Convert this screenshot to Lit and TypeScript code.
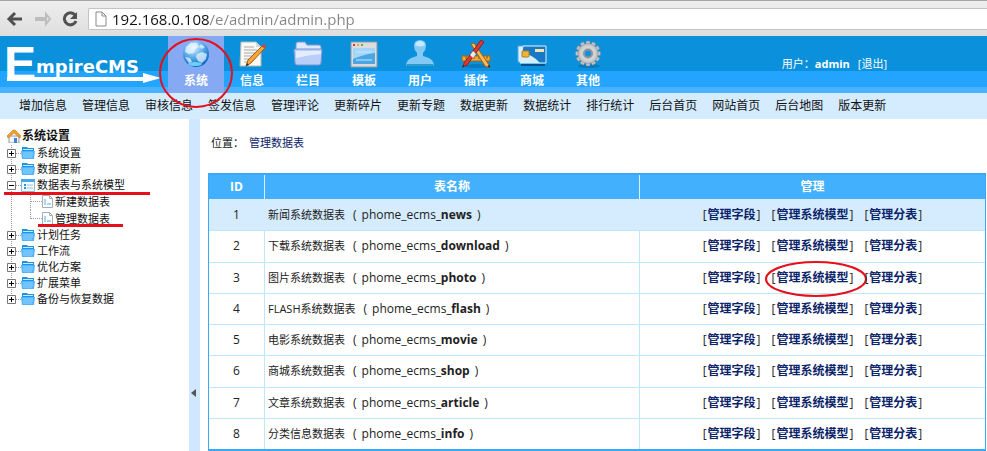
import { LitElement, html, svg, css, nothing } from "lit";
import { customElement, property } from "lit/decorators.js";
import { classMap } from "lit/directives/class-map.js";

const fonts = css`"Open Sans", "Noto Sans CJK SC", sans-serif`;

const topIcons: Record<string, unknown> = {
  globe: svg`
    <defs><radialGradient id="g" cx="40%" cy="25%" r="75%"><stop offset="0" stop-color="#e8f6ff"/><stop offset=".45" stop-color="#69b4ee"/><stop offset="1" stop-color="#0768c4"/></radialGradient></defs>
    <circle cx="15" cy="15" r="13" fill="url(#g)"/>
    <path d="M5 8l5-4 6 0 2 4-4 2-1 4-5 1-4-2zM16 15l5-2 5 2-1 5-4 4-4-2-2-4zM20 5l4 3-3 2-3-2zM4 18l5 1 2 4-3 1z" fill="#f0f8ff" opacity=".7"/>
    <ellipse cx="14" cy="25" rx="7" ry="2" fill="#7fe4ff" opacity=".8"/>`,
  doc: svg`
    <path d="M4 3h15l5 5v19H3z" fill="#f8f8f4" stroke="#b9b9b4"/><path d="M19 3v5h5z" fill="#d8d8d4"/>
    <path d="M7 8h10M7 11h13M7 14h12M7 17h9M7 20h7M7 23h5" stroke="#a9a9a9"/>
    <path d="M25 7l3 2-14 15-5 3 2-6z" fill="#f3a536" stroke="#a55b18"/>
    <path d="M25 7l2-2 2 2-1 3z" fill="#d8433d"/><path d="M9 27l1-3 2 2z" fill="#333"/>`,
  folder: svg`
    <path d="M3 5q0-2 2-2h7l2 3h12q2 0 2 2v15H3z" fill="#dfe9fb" stroke="#7d9ad2"/>
    <path d="M1 11q0-1 1-1h26q1 0 1 1l-1 13q0 2-2 2H4q-2 0-2-2z" fill="#b9cff7" stroke="#7795d4"/>
    <path d="M3 12h25v3q-13 1-25 4z" fill="#e3edff"/>`,
  window: svg`
    <path d="M2 3h26v25H2z" fill="#dcdcdc" stroke="#8d9aa5"/>
    <circle cx="5" cy="6" r="1" fill="#d00"/><circle cx="9" cy="6" r="1" fill="#e90"/><circle cx="13" cy="6" r="1" fill="#393"/>
    <path d="M4 9h22v16H4z" fill="#4ba6e4"/><path d="M4 9h22v5q-10 1-22 6z" fill="#a3d6f8"/><path d="M7 13h16M7 21h16" stroke="#c8e8ff"/>`,
  user: svg`
    <path d="M1 27q0-7 8-9l3-1v-3q-3-3-3-7 0-6 6-6t6 6q0 4-3 7v3l3 1q8 2 8 9z" fill="#83c9f6"/>
    <path d="M10 6q1-4 5-4t5 4q-5 3-10 0z" fill="#c6e8ff"/><path d="M2 25h26l1 2H1z" fill="#2c9cc8"/>`,
  tools: svg`
    <ellipse cx="16" cy="27" rx="12" ry="2" fill="#05639f" opacity=".5"/>
    <path d="M1 17h28v5H1z" fill="#eda83b" stroke="#a96513"/><path d="M5 17v3M9 17v3M13 17v3M18 17v3M22 17v3M26 17v3" stroke="#8f5510"/>
    <path d="M10 5l3-1 15 22v3l-4-2z" fill="#f6bd55" stroke="#a15d14"/><path d="M26 27l3 2v-3z" fill="#333"/>
    <path d="M20 1l3 2L6 26l-4 2 1-4z" fill="#d63a31" stroke="#96201a"/><path d="M12 12l3 3-3 4-3-3z" fill="#e9edf2"/><path d="M2 26l2 1-3 2z" fill="#333"/>`,
  card: svg`
    <path d="M1 7h22v16H1z" fill="#d8f0ff" stroke="#56a9df"/>
    <path d="M6 7h23v17H3z" fill="#1978c6" stroke="#d9f1ff"/>
    <path d="M5 14q10 1 18 10H3z" fill="#d4effc"/><path d="M18 10h9v3h-9z" fill="#f3e5b0"/>
    <rect x="5" y="12" width="7" height="6" rx="1" fill="#f2b43c" stroke="#b87a15"/><path d="M4 26h24" stroke="#0c4f8f" stroke-width="2"/>`,
  gear: svg`
    <ellipse cx="16" cy="27" rx="11" ry="2" fill="#05639f" opacity=".5"/>
    <g fill="#c0c4c8" stroke="#85898e" stroke-width=".5">
      ${[0, 30, 60, 90, 120, 150].map((a) => svg`<rect x="13" y="2" width="4" height="25" rx="1" transform="rotate(${a} 15 14.5)"/>`)}
      <circle cx="15" cy="14.500" r="10" />
    </g>
    <circle cx="15" cy="14.500" r="8" fill="#d0d2d4"/><circle cx="15" cy="14.500" r="5" fill="#90959a"/><circle cx="15" cy="14.500" r="3" fill="#1391de"/>`,
};

const sections = [
  { label: "系统", icon: "globe", active: true },
  { label: "信息", icon: "doc" },
  { label: "栏目", icon: "folder" },
  { label: "模板", icon: "window" },
  { label: "用户", icon: "user" },
  { label: "插件", icon: "tools" },
  { label: "商城", icon: "card" },
  { label: "其他", icon: "gear" },
];

const quickLinks = [
  "增加信息", "管理信息", "审核信息", "签发信息", "管理评论", "更新碎片", "更新专题",
  "数据更新", "数据统计", "排行统计", "后台首页", "网站首页", "后台地图", "版本更新",
];

interface Branch {
  label: string;
  marked?: boolean;
  children?: { label: string; marked?: boolean }[];
}

const tree: Branch[] = [
  { label: "系统设置" },
  { label: "数据更新" },
  {
    label: "数据表与系统模型",
    marked: true,
    children: [{ label: "新建数据表" }, { label: "管理数据表", marked: true }],
  },
  { label: "计划任务" },
  { label: "工作流" },
  { label: "优化方案" },
  { label: "扩展菜单" },
  { label: "备份与恢复数据" },
];

const dataTables = [
  ["新闻系统数据表", "news"],
  ["下载系统数据表", "download"],
  ["图片系统数据表", "photo"],
  ["FLASH系统数据表", "flash"],
  ["电影系统数据表", "movie"],
  ["商城系统数据表", "shop"],
  ["文章系统数据表", "article"],
  ["分类信息数据表", "info"],
];

@customElement("browser-bar")
class BrowserBar extends LitElement {
  static styles = css`
    :host { display: flex; align-items: center; height: 36px; padding-left: 6px; background: linear-gradient(#eeeeee, #dedede); border-top: 1px solid #a8a4a6; box-sizing: border-box; overflow: hidden; }
    button { display: flex; width: 28px; height: 24px; padding: 0; border: 0; background: none; align-items: center; }
    .address { display: flex; align-items: center; flex: 1; height: 22px; margin-left: -2px; padding-left: 6px; background: #fff; border: 1px solid #c4c4c4; border-right: 0; border-radius: 2px 0 0 2px; box-sizing: border-box; }
    input { flex: 1; min-width: 0; margin-left: 5px; padding: 0; border: 0; outline: 0; font: 15px/20px "Open Sans", sans-serif; color: transparent; background: linear-gradient(90deg, #111 98px, #858585 98px); -webkit-background-clip: text; background-clip: text; }
  `;
  render() {
    return html`
      <button aria-label="后退"><svg width="18" height="16" viewBox="0 0 18 16" fill="none" stroke="#505050" stroke-width="3"><path d="M16 8H4M9 2L3 8l6 6"/></svg></button>
      <button aria-label="前进"><svg width="18" height="16" viewBox="0 0 18 16" fill="none" stroke="#bdbdbd" stroke-width="2"><path d="M2 7h10v-4l4 5-4 5v-4H2z"/></svg></button>
      <button aria-label="刷新"><svg width="18" height="16" viewBox="0 0 18 16"><path d="M13 4a6 6 0 1 0 1 6" fill="none" stroke="#505050" stroke-width="3"/><path d="M15 1v7H8z" fill="#505050"/></svg></button>
      <div class="address">
        <svg width="12" height="16" viewBox="0 0 12 16" fill="#fff" stroke="#8a8a8a"><path d="M1 1h6l4 4v10H1zM7 1v4h4"/></svg>
        <input aria-label="地址" value="192.168.0.108/e/admin/admin.php" />
      </div>`;
  }
}

@customElement("cms-header")
class CmsHeader extends LitElement {
  static styles = css`
    :host { display: block; font: 12px/16px ${fonts}; }
    .banner { display: flex; height: 57px; color: #fff; background: linear-gradient(#0b90dc 35px, #22a4ff 35px 51px, #48b2ff 51px); }
    .logo { position: relative; display: flex; flex: none; width: 168px; padding-left: 4px; box-sizing: border-box; }
    .initial { font: bold 48px/56px "Liberation Sans", sans-serif; }
    .rest { font: bold 18px/62px "DejaVu Sans", sans-serif; }
    .arrow { position: absolute; left: 7px; bottom: 9px; }
    nav.sections { display: flex; flex: none; }
    .section { position: relative; display: flex; flex-direction: column; align-items: center; width: 56px; padding-top: 3px; box-sizing: border-box; color: #fff; text-decoration: none; font-weight: bold; gap: 4px; }
    .active { background: #86a9f3; }
    .ring { position: absolute; left: -10px; top: 1px; z-index: 1; }
    .account { display: flex; gap: 8px; margin: 20px 100px 0 auto; font-size: 11px; white-space: nowrap; }
    .account a { color: #fff; text-decoration: none; }
    .quick { display: flex; gap: 15px; height: 26px; padding-left: 19px; background: #d5ecff; line-height: 26px; white-space: nowrap; overflow: hidden; }
    .quick a { color: #111; text-decoration: none; }
  `;
  render() {
    return html`
      <header class="banner">
        <div class="logo">
          <span class="initial">E</span><span class="rest">mpireCMS</span>
          <svg class="arrow" width="154" height="12" viewBox="0 0 154 12" fill="#fff"><path d="M0 5h136V1l18 5-18 5V9H0z"/></svg>
        </div>
        <nav class="sections">
          ${sections.map((s) => html`
            <a href="#" class=${classMap({ section: true, active: !!s.active })}>
              <svg width="30" height="30" viewBox="0 0 30 30">${topIcons[s.icon]}</svg>
              <span>${s.label}</span>
              ${s.active ? html`<svg class="ring" width="76" height="72" viewBox="0 0 76 72"><ellipse cx="38" cy="36" rx="36" ry="34" fill="none" stroke="#e60f1c" stroke-width="2"/></svg>` : nothing}
            </a>`)}
        </nav>
        <div class="account"><span>用户：<b>admin</b></span><a href="#">[退出]</a></div>
      </header>
      <nav class="quick">${quickLinks.map((l) => html`<a href="#">${l}</a>`)}</nav>`;
  }
}

@customElement("side-tree")
class SideTree extends LitElement {
  static styles = css`
    :host { display: block; padding: 8px 0 0 7px; font: 11px/16px ${fonts}; color: #111; white-space: nowrap; }
    h2 { display: flex; align-items: center; gap: 1px; margin: 0; font-size: 12px; line-height: 18px; }
    ul { margin: 0; padding: 0; list-style: none; }
    .row { position: relative; display: flex; align-items: center; height: 16px; }
    .row a { color: #111; text-decoration: none; margin-left: 2px; }
    .toggle { display: flex; width: 9px; height: 9px; padding: 0; border: 0; background: none; }
    .stub { width: 5px; border-top: 1px dotted #999; }
    .branch { background: repeating-linear-gradient(#999 0 1px, transparent 1px 2px) 4px 0 / 1px 100% no-repeat; }
    .branch:last-child { background-size: 1px 8px; }
    .leaves { margin-left: 23px; }
    .leaves li { background: repeating-linear-gradient(#999 0 1px, transparent 1px 2px) 0 0 / 1px 100% no-repeat; }
    .leaves li:last-child { background-size: 1px 8px; }
    .leaves .row { height: 17px; }
    .leaves .stub { width: 12px; }
    .mark::after { content: ""; position: absolute; left: -3px; bottom: -2px; z-index: 1; width: 146px; height: 3px; background: #e60f1c; }
    .leaves .mark::after { left: 8px; width: 85px; bottom: 0; }
  `;
  private toggle(open: boolean) {
    return html`<button class="toggle" aria-label=${open ? "收起" : "展开"}>
      <svg width="9" height="9" viewBox="0 0 9 9"><path d="M.5.5h8v8h-8z" fill="#fff" stroke="#777"/><path d=${open ? "M2 4.5h5" : "M2 4.5h5M4.5 2v5"} stroke="#000"/></svg>
    </button>`;
  }
  private folder(open: boolean) {
    return open
      ? html`<svg width="14" height="14" viewBox="0 0 14 14"><path d="M.5 1.500h13v12h-13z" fill="#f4fbff" stroke="#8bb9d8"/><path d="M0 1h14v3H0z" fill="#43aaf2"/><path d="M3 7h2M3 10h2" stroke="#2f8fda" stroke-width="2"/><path d="M6 7h6M6 10h6" stroke="#9cc4e0"/></svg>`
      : html`<svg width="14" height="14" viewBox="0 0 14 14"><path d="M1 13V1h5l1 1h6v11z" fill="#1b94e6"/><path d="M2 3.500h10" stroke="#c5e9ff"/><path d="M0 5h14l-1 8H1z" fill="#55b4f8"/><path d="M2 7h10M2 9h10M2 11h9" stroke="#8ed3ff"/></svg>`;
  }
  render() {
    return html`
      <h2>
        <svg width="14" height="14" viewBox="0 0 14 14"><path d="M2 7h10v7H2z" fill="#f4f4f4" stroke="#999"/><path d="M0 7l6-6 2 0 6 6-1 2-6-5-6 5z" fill="#f5a02c" stroke="#b66a10" stroke-width=".5"/><path d="M7 9h3v5H7z" fill="#3a89cf"/></svg>
        系统设置
      </h2>
      <ul>
        ${tree.map((b) => html`
          <li class="branch">
            <div class=${classMap({ row: true, mark: !!b.marked })}>
              ${this.toggle(!!b.children)}<span class="stub"></span>${this.folder(!!b.children)}<a href="#">${b.label}</a>
            </div>
            ${b.children ? html`<ul class="leaves">${b.children.map((c) => html`
              <li><div class=${classMap({ row: true, mark: !!c.marked })}>
                <span class="stub"></span>
                <svg width="11" height="13" viewBox="0 0 11 13"><path d="M.5.5h7l3 3v9H.5z" fill="#fff" stroke="#a5aeb3"/><path d="M7.500.5v3h3" fill="none" stroke="#a5aeb3"/><path d="M3 4v6M5 9h4" stroke="#4aa7e6"/></svg>
                <a href="#">${c.label}</a>
              </div></li>`)}</ul>` : nothing}
          </li>`)}
      </ul>`;
  }
}

@customElement("table-list")
class TableList extends LitElement {
  static styles = css`
    :host { display: grid; grid-template-rows: auto 1fr; padding: 0 1px 0 8px; font: 11px/16px ${fonts}; color: #222; }
    .crumb { display: flex; gap: 5px; padding: 16px 3px 22px; }
    a { color: #0b2368; text-decoration: none; }
    table { width: 100%; border: 1px solid #3ba7f8; border-width: 2px 1px; border-spacing: 0; table-layout: fixed; }
    th { height: 24px; padding: 0; color: #fff; background: #43b0fd; font-size: 12px; border-left: 1px solid #d8f0ff; }
    td { height: 30px; padding: 0; border-top: 1px solid #bfe5ff; border-left: 1px solid #bfe5ff; text-align: center; font-size: 12px; }
    tr > :first-child { border-left: 0; }
    col.num { width: 55px; }
    col.name { width: 52%; }
    col.ops { width: 48%; }
    .first td { background: #d5ecff; border-color: #d5ecff; }
    .title { display: flex; padding-left: 3px; gap: 8px; }
    .zh { font-size: 11px; }
    .key { display: flex; gap: 5px; }
    .actions { display: flex; justify-content: center; gap: 11px; }
    .actions span { position: relative; display: flex; gap: 1px; }
    .ring { position: absolute; left: -7px; top: -9px; }
  `;
  @property({ type: Number }) highlighted = 3;
  render() {
    return html`
      <div class="crumb"><span>位置：</span><a href="#">管理数据表</a></div>
      <table>
        <colgroup><col class="num" /><col class="name" /><col class="ops" /></colgroup>
        <thead><tr><th>ID</th><th>表名称</th><th>管理</th></tr></thead>
        <tbody>
          ${dataTables.map(([title, key], i) => html`
            <tr class=${classMap({ first: i === 0 })}>
              <td>${i + 1}</td>
              <td><div class="title">
                <span class="zh">${title}</span>
                <span class="key"><span>(</span><span>phome_ecms<b>_${key}</b></span><span>)</span></span>
              </div></td>
              <td><div class="actions">
                <span>[<a href="#"><b>管理字段</b></a>]</span>
                <span>[<a href="#"><b>管理系统模型</b></a>]${i + 1 === this.highlighted
                  ? html`<svg class="ring" width="102" height="36" viewBox="0 0 102 36"><ellipse cx="51" cy="18" rx="50" ry="17" fill="none" stroke="#e60f1c" stroke-width="2"/></svg>`
                  : nothing}</span>
                <span>[<a href="#"><b>管理分表</b></a>]</span>
              </div></td>
            </tr>`)}
        </tbody>
      </table>`;
  }
}

@customElement("app-root")
class AppRoot extends LitElement {
  static styles = css`
    :host { display: flex; flex-direction: column; min-height: 100vh; background: #fff; }
    .body { display: flex; flex: 1; }
    side-tree { flex: none; width: 189px; box-sizing: border-box; }
    .splitter { display: flex; align-items: flex-start; flex: none; width: 11px; padding: 270px 0 0 2px; border: 0; background: #cfe8ff; box-sizing: border-box; }
    table-list { flex: 1; min-width: 0; }
  `;
  render() {
    return html`
      <browser-bar></browser-bar>
      <cms-header></cms-header>
      <div class="body">
        <side-tree></side-tree>
        <button class="splitter" aria-label="收起侧栏"><svg width="5" height="8" viewBox="0 0 5 8"><path d="M5 0v8L0 4z" fill="#555"/></svg></button>
        <table-list></table-list>
      </div>`;
  }
}
